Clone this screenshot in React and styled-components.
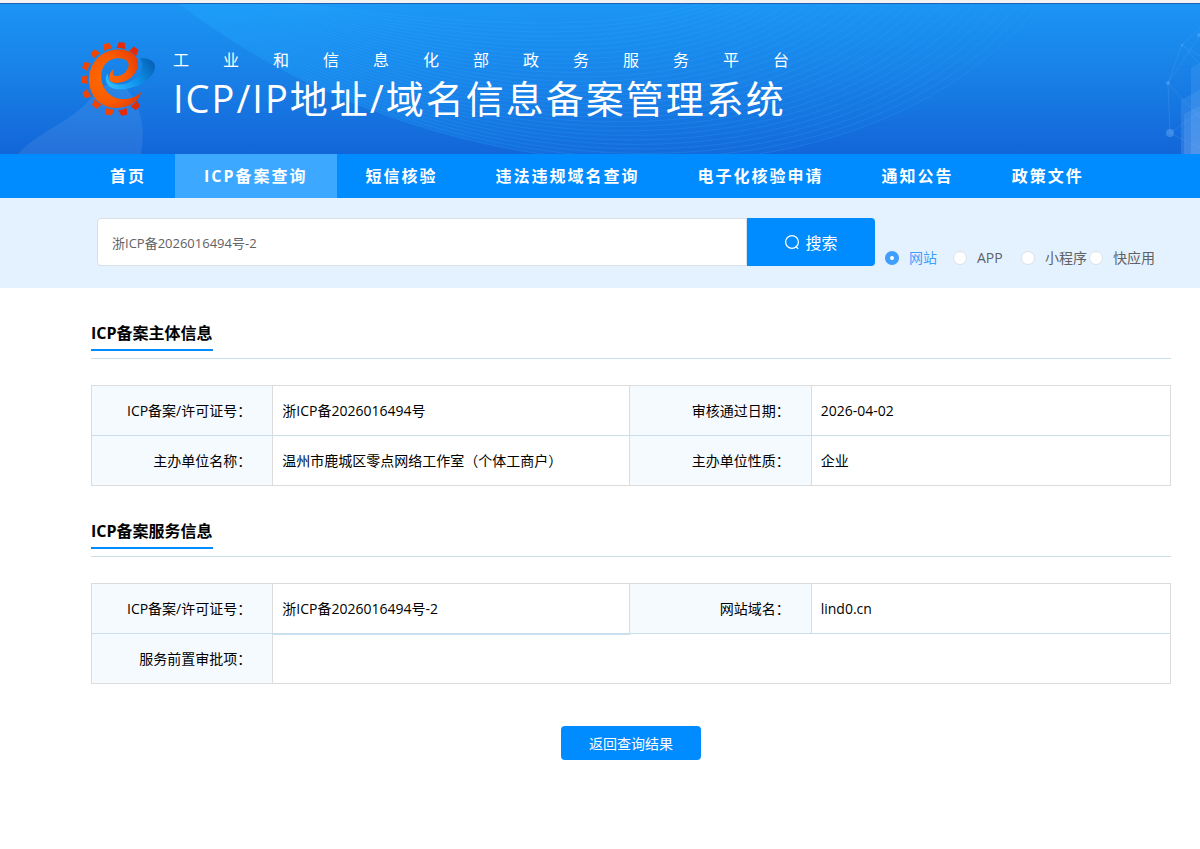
import React, { useState } from "react";
import styled, { createGlobalStyle } from "styled-components";

const navItems = [
  "首页",
  "ICP备案查询",
  "短信核验",
  "违法违规域名查询",
  "电子化核验申请",
  "通知公告",
  "政策文件",
];

const searchTypes = ["网站", "APP", "小程序", "快应用"];

const App = () => {
  const [keyword, setKeyword] = useState("浙ICP备2026016494号-2");
  const [type, setType] = useState("网站");

  return (
    <>
      <GlobalStyle />
      <Header>
        <Backdrop />
        <Logo />
        <Brand>
          <SubTitle>工业和信息化部政务服务平台</SubTitle>
          <Title>ICP/IP地址/域名信息备案管理系统</Title>
        </Brand>
      </Header>

      <Nav>
        {navItems.map((item) => (
          <NavItem key={item} href="#" $active={item === "ICP备案查询"}>
            {item}
          </NavItem>
        ))}
      </Nav>

      <SearchBar onSubmit={(e) => e.preventDefault()}>
        <SearchInput
          aria-label="搜索"
          value={keyword}
          onChange={(e) => setKeyword(e.target.value)}
        />
        <SearchButton type="submit">
          <SearchIcon />
          搜索
        </SearchButton>
        <TypeGroup>
          {searchTypes.map((item) => (
            <TypeLabel key={item} $checked={type === item}>
              <Radio
                type="radio"
                name="type"
                checked={type === item}
                onChange={() => setType(item)}
              />
              {item}
            </TypeLabel>
          ))}
        </TypeGroup>
      </SearchBar>

      <Main>
        <Section>
          <SectionHead>
            <SectionTitle>ICP备案主体信息</SectionTitle>
          </SectionHead>
          <InfoTable>
            <Columns />
            <tbody>
              <tr>
                <Label>ICP备案/许可证号：</Label>
                <Value>浙ICP备2026016494号</Value>
                <Label>审核通过日期：</Label>
                <Value>2026-04-02</Value>
              </tr>
              <tr>
                <Label>主办单位名称：</Label>
                <Value>温州市鹿城区零点网络工作室（个体工商户）</Value>
                <Label>主办单位性质：</Label>
                <Value>企业</Value>
              </tr>
            </tbody>
          </InfoTable>
        </Section>

        <Section>
          <SectionHead>
            <SectionTitle>ICP备案服务信息</SectionTitle>
          </SectionHead>
          <InfoTable>
            <Columns />
            <tbody>
              <tr>
                <Label>ICP备案/许可证号：</Label>
                <Value $underline>浙ICP备2026016494号-2</Value>
                <Label>网站域名：</Label>
                <Value>lind0.cn</Value>
              </tr>
              <tr>
                <Label>服务前置审批项：</Label>
                <Value colSpan={3} />
              </tr>
            </tbody>
          </InfoTable>
        </Section>

        <BackButton type="button">返回查询结果</BackButton>
      </Main>
    </>
  );
};

const Columns = () => (
  <colgroup>
    <col style={{ width: "16.8%" }} />
    <col style={{ width: "33.1%" }} />
    <col style={{ width: "16.8%" }} />
    <col style={{ width: "33.3%" }} />
  </colgroup>
);

// gear teeth: centre of each one and its angle
const teeth = [
  [193, 63, 36],
  [154, 47, 8],
  [112, 50, -14],
  [75, 71, -40],
  [49, 108, -66],
  [43, 149, -90],
  [50, 192, -118],
  [79, 223, -142],
  [118, 245, -170],
  [160, 246, -196],
  [197, 227, -222],
];

const Logo = () => (
  <LogoSvg viewBox="30 30 231 234" aria-hidden="true">
    <defs>
      <radialGradient id="body" cx="0.3" cy="0.5" r="0.75">
        <stop offset="0" stopColor="#ff6a00" />
        <stop offset="0.55" stopColor="#fa5a00" />
        <stop offset="1" stopColor="#e23a05" />
      </radialGradient>
      <linearGradient id="orbit" x1="0" y1="0.6" x2="1" y2="0.2">
        <stop offset="0" stopColor="#2cb8ff" />
        <stop offset="0.5" stopColor="#0e93ec" />
        <stop offset="1" stopColor="#0560b4" />
      </linearGradient>
    </defs>
    <path
      fill="url(#orbit)"
      d="M210 84C238 84 257 94 255 113C251 146 199 178 150 178C119 178 104 163 108 141C109 136 111 134 114 132C111 160 138 168 166 161C206 150 228 116 210 84Z"
    />
    <path
      fill="url(#body)"
      d="M133 117C119 125 115 141 119 150C126 164 163 161 184 142C204 124 209 101 200 84C186 61 155 56 130 60C86 66 57 105 57 150C57 200 95 235 140 234C180 233 206 215 215 184C200 203 175 209 155 207C115 204 92 170 94 135C96 106 115 87 140 85C166 83 180 96 175 111C169 130 150 140 136 138C126 136 128 125 133 117Z"
    />
    {teeth.map(([x, y, angle]) => (
      <path
        key={angle}
        fill={x > 140 ? "#e62a08" : "#f04405"}
        transform={`translate(${x} ${y}) rotate(${angle})`}
        d="M-9 -10H9L13 9Q0 6 -13 9Z"
      />
    ))}
  </LogoSvg>
);

const mix = (a, b, t) => Math.round((a + (b - a) * t) * 10) / 10;

// family of curves between the lower and the upper edge of the wave
const waves = Array.from({ length: 32 }, (_, i) => {
  const t = i / 31;
  return `M${mix(180, 300, t)} 0C${mix(440, 460, t)} ${mix(200, 20, t)} ${mix(
    860,
    600,
    t
  )} ${mix(222, 30, t)} ${mix(1040, 700, t)} 0`;
});

const Backdrop = () => (
  <BackdropSvg
    viewBox="0 0 1200 150"
    preserveAspectRatio="xMidYMid slice"
    aria-hidden="true"
  >
    <defs>
      <linearGradient id="glow" x1="0" y1="0" x2="1" y2="0">
        <stop offset="0" stopColor="#1fa4ff" stopOpacity="0.4" />
        <stop offset="0.4" stopColor="#1fa4ff" stopOpacity="0.12" />
        <stop offset="1" stopColor="#1fa4ff" stopOpacity="0" />
      </linearGradient>
      <linearGradient id="tower" x1="0" y1="0" x2="0" y2="1">
        <stop offset="0" stopColor="#8fc4ff" stopOpacity="0.12" />
        <stop offset="1" stopColor="#8fc4ff" stopOpacity="0.2" />
      </linearGradient>
    </defs>
    <path fill="url(#glow)" d="M180 0C440 200 860 222 1040 0Z" />
    <g fill="none" stroke="#2db4ff" strokeOpacity="0.2">
      {waves.map((d) => (
        <path key={d} d={d} />
      ))}
    </g>
    <path
      fill="#fff"
      fillOpacity="0.08"
      d="M18 150C40 126 72 118 92 93C104 76 121 77 130 89C143 108 145 128 141 150Z"
    />
    <g stroke="#8fc4ff" strokeOpacity="0.15" fill="none">
      <path d="M1200 24L1182 41L1168 79L1170 129L1200 108M1182 41L1200 52M1168 79L1200 31M1168 79L1200 114M1182 41L1200 60M1170 129L1200 144" />
    </g>
    <g fill="#7fbcff" fillOpacity="0.35">
      <circle cx="1182" cy="41" r="1" />
      <circle cx="1199" cy="31" r="2" />
      <circle cx="1168" cy="79" r="2" />
      <circle cx="1170" cy="129" r="4" />
    </g>
    <g fill="url(#tower)">
      <path d="M1191 64L1200 59V150H1191Z" />
      <path d="M1181 96L1200 86V150H1181Z" />
      <path d="M1184 110L1200 102V150H1184Z" />
    </g>
  </BackdropSvg>
);

const SearchIcon = () => (
  <svg width="16" height="16" viewBox="0 0 16 16" fill="none" stroke="#fff">
    <circle cx="8" cy="8" r="6.4" strokeWidth="1.2" />
    <path d="M11.6 12L14.2 14.8" strokeWidth="1.2" />
  </svg>
);

const GlobalStyle = createGlobalStyle`
  * {
    box-sizing: border-box;
  }

  body {
    margin: 0;
    background: #fff;
    color: #000;
    font-family: "Open Sans", "Noto Sans CJK SC", sans-serif;
    font-size: 14px;
    line-height: 20px;
    border-top: 3px solid #f2f2f2;
  }

  button,
  input {
    font-family: inherit;
  }
`;

const Header = styled.header`
  position: relative;
  display: flex;
  align-items: flex-start;
  gap: 16px;
  padding: 36px 0 36px 80px;
  border-top: 1px solid #1c62b4;
  background: linear-gradient(#1b95f5, #187fe6 50%, #1366d8);
`;

const BackdropSvg = styled.svg`
  position: absolute;
  inset: 0;
  width: 100%;
  height: 100%;
`;

const LogoSvg = styled.svg`
  position: relative;
  width: 77px;
  height: 78px;
`;

const Brand = styled.div`
  position: relative;
  padding-top: 10px;
  color: #fff;
  white-space: nowrap;
`;

const SubTitle = styled.div`
  font-size: 16px;
  line-height: 20px;
  letter-spacing: 34px;
`;

const Title = styled.h1`
  margin: 0;
  font-size: 38px;
  font-weight: 400;
  line-height: 56px;
  height: 48px;
  letter-spacing: 2px;
`;

const Nav = styled.nav`
  display: flex;
  padding-left: 81px;
  background: #008cff;
`;

const NavItem = styled.a`
  padding: 0 29px;
  background: ${(props) => (props.$active ? "#3ca8ff" : "transparent")};
  color: #fff;
  font-size: 16px;
  font-weight: 700;
  line-height: 44px;
  letter-spacing: 2px;
  text-decoration: none;
  white-space: nowrap;
`;

const SearchBar = styled.form`
  display: flex;
  align-items: flex-start;
  min-height: 90px;
  padding: 20px 43px 20px 97px;
  background: #e4f2ff;
`;

const SearchInput = styled.input`
  flex: 1;
  min-width: 0;
  height: 48px;
  padding: 0 14px;
  border: 1px solid #dcdfe6;
  border-radius: 4px 0 0 4px;
  background: #fff;
  color: #606266;
  font-size: 13px;
  outline: none;
`;

const SearchButton = styled.button`
  display: flex;
  align-items: center;
  justify-content: center;
  gap: 5px;
  width: 128px;
  height: 48px;
  border: none;
  border-radius: 0 4px 4px 0;
  background: #008cff;
  color: #fff;
  font-size: 16px;
  cursor: pointer;
`;

const TypeGroup = styled.div`
  display: grid;
  grid-template-columns: repeat(4, 68px);
  align-self: flex-end;
  margin-left: 10px;
`;

const TypeLabel = styled.label`
  display: flex;
  align-items: center;
  gap: 10px;
  color: ${(props) => (props.$checked ? "#409eff" : "#606266")};
  white-space: nowrap;
  cursor: pointer;
`;

const Radio = styled.input`
  flex: none;
  width: 14px;
  height: 14px;
  margin: 0;
  appearance: none;
  border: 1px solid #dcdfe6;
  border-radius: 50%;
  background: #fff;

  &:checked {
    border: 5px solid #409eff;
  }
`;

const Main = styled.main`
  display: flex;
  flex-direction: column;
  padding: 32px 29px 88px 91px;
`;

const Section = styled.section`
  margin-bottom: 32px;
`;

const SectionHead = styled.div`
  display: flex;
  margin-bottom: 26px;
  padding-bottom: 7px;
  border-bottom: 1px solid #c9dfee;
`;

const SectionTitle = styled.h2`
  margin: 0;
  padding-bottom: 3px;
  border-bottom: 2px solid #008cff;
  font-size: 16px;
  font-weight: 700;
  line-height: 26px;
`;

const InfoTable = styled.table`
  width: 100%;
  table-layout: fixed;
  border-collapse: collapse;

  th,
  td {
    height: 50px;
    border: 1px solid #dcdcdc;
  }

  tr:not(:last-child) > * {
    border-bottom-color: #c9dfee;
  }

  tr + tr > * {
    border-top-color: #c9dfee;
  }
`;

const Label = styled.th.attrs({ scope: "row" })`
  padding: 0 21px 0 0;
  background: #f5faff;
  font-weight: 400;
  text-align: right;
`;

const Value = styled.td`
  padding: 0 9px;
  box-shadow: ${(props) => (props.$underline ? "0 1px 0 #c9dfee" : "none")};
`;

const BackButton = styled.button`
  align-self: center;
  width: 140px;
  height: 34px;
  margin-top: 10px;
  border: none;
  border-radius: 4px;
  background: #008cff;
  color: #fff;
  font-size: 14px;
  cursor: pointer;
`;

export default App;
